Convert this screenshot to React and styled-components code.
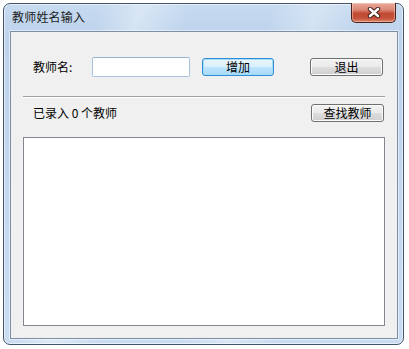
import React, { useState } from "react";
import styled, { createGlobalStyle } from "styled-components";

const GlobalStyle = createGlobalStyle`
  html, body {
    margin: 0;
    padding: 0;
    background: #ffffff;
  }
  body {
    font-family: "Noto Sans CJK SC", "Liberation Sans", sans-serif;
    font-size: 12px;
    color: #000;
  }
`;

const Window = styled.div`
  box-sizing: border-box;
  width: 401px;
  height: 342px;
  margin: 3px 0 0 3px;
  display: flex;
  flex-direction: column;
  border: 1px solid #44546a;
  border-radius: 7px;
  padding: 0 5px 5px 6px;
  background:
    linear-gradient(105deg, rgba(255,255,255,0) 20%, rgba(255,255,255,0.35) 28%, rgba(255,255,255,0) 38%, rgba(255,255,255,0) 55%, rgba(255,255,255,0.3) 64%, rgba(255,255,255,0) 74%),
    linear-gradient(180deg, #c6daf0 0%, #bdd3ec 10%, #c3d8ef 60%, #c9dcf2 100%);
  box-shadow: inset 0 0 0 1px rgba(255,255,255,0.55);
`;

const TitleBar = styled.div`
  height: 27px;
  display: flex;
  align-items: flex-start;
  flex-shrink: 0;
`;

const Title = styled.div`
  padding: 6px 0 0 2px;
  line-height: 14px;
  font-size: 12px;
  color: #1b1b1b;
  letter-spacing: 0.2px;
`;

const CloseButton = styled.div`
  box-sizing: border-box;
  margin: -1px 2px 0 auto;
  width: 45px;
  height: 20px;
  display: flex;
  align-items: center;
  justify-content: center;
  border: 1px solid #4a2019;
  border-top: none;
  border-radius: 0 0 5px 5px;
  background: linear-gradient(180deg, #e8a898 0%, #dc8a77 35%, #c24a33 55%, #c5513a 80%, #db8a6f 100%);
  box-shadow: inset 0 0 0 1px rgba(255, 220, 210, 0.45);
`;

const Client = styled.div`
  flex: 1;
  box-sizing: border-box;
  display: flex;
  flex-direction: column;
  background: #f0f0f0;
  border: 1px solid #7d8fa5;
  box-shadow: 0 0 0 1px rgba(255, 255, 255, 0.5);
  padding: 25px 12px 12px 12px;
`;

const Row = styled.div`
  display: flex;
  align-items: center;
  height: ${(p) => p.$h}px;
  padding: 0 1px 0 10px;
  margin-top: ${(p) => p.$top || 0}px;
  flex-shrink: 0;
`;

const Label = styled.span`
  width: ${(p) => p.$w || "auto"};
  line-height: 16px;
`;

const TextBox = styled.input`
  box-sizing: border-box;
  width: 98px;
  height: 20px;
  border: 1px solid #a9c3de;
  border-top-color: #98b1cc;
  border-radius: 2px;
  background: #fff;
  outline: none;
  padding: 0 3px;
  font: inherit;
`;

const Button = styled.button`
  box-sizing: border-box;
  width: ${(p) => p.$w}px;
  height: 18px;
  margin-left: ${(p) => p.$ml || "0px"};
  padding: 0;
  font-family: inherit;
  font-size: 12px;
  line-height: 14px;
  color: #000;
  border-radius: 3px;
  border: 1px solid ${(p) => (p.$active ? "#2a8fd8" : "#707070")};
  background: ${(p) =>
    p.$active
      ? "linear-gradient(180deg, #eaf6fd 0%, #d9f0fc 48%, #bee6fd 52%, #a7d9f5 100%)"
      : "linear-gradient(180deg, #f2f2f2 0%, #ebebeb 48%, #dddddd 52%, #cfcfcf 100%)"};
  box-shadow: inset 0 0 0 1px ${(p) => (p.$active ? "#a8dcf6" : "#fbfbfb")};
`;

const Separator = styled.div`
  margin-top: 19px;
  height: 0;
  border-top: 1px solid #a0a0a0;
  border-bottom: 1px solid #ffffff;
  flex-shrink: 0;
`;

const ListBox = styled.div`
  flex: 1;
  margin-top: 15px;
  background: #fff;
  border: 1px solid #828790;
`;

const CloseGlyph = () => (
  <svg width="14" height="11" viewBox="0 0 14 11">
    <path d="M3 2 L11 9 M11 2 L3 9" stroke="#3b1a14" strokeWidth="4.4" strokeLinecap="round" />
    <path d="M3 2 L11 9 M11 2 L3 9" stroke="#ffffff" strokeWidth="2.6" strokeLinecap="round" />
  </svg>
);

export default function App() {
  const [name, setName] = useState("");
  const [teachers, setTeachers] = useState([]);

  return (
    <>
      <GlobalStyle />
      <Window>
        <TitleBar>
          <Title>教师姓名输入</Title>
          <CloseButton>
            <CloseGlyph />
          </CloseButton>
        </TitleBar>
        <Client>
          <Row $h={20}>
            <Label $w="59px">教师名:</Label>
            <TextBox value={name} onChange={(e) => setName(e.target.value)} />
            <Button $w={72} $ml="12px" $active onClick={() => name && setTeachers([...teachers, name])}>
              增加
            </Button>
            <Button $w={73} $ml="36px">退出</Button>
          </Row>
          <Separator />
          <Row $h={18} $top={6}>
            <Label>已录入 {teachers.length} 个教师</Label>
            <Button $w={73} $ml="auto">查找教师</Button>
          </Row>
          <ListBox />
        </Client>
      </Window>
    </>
  );
}
